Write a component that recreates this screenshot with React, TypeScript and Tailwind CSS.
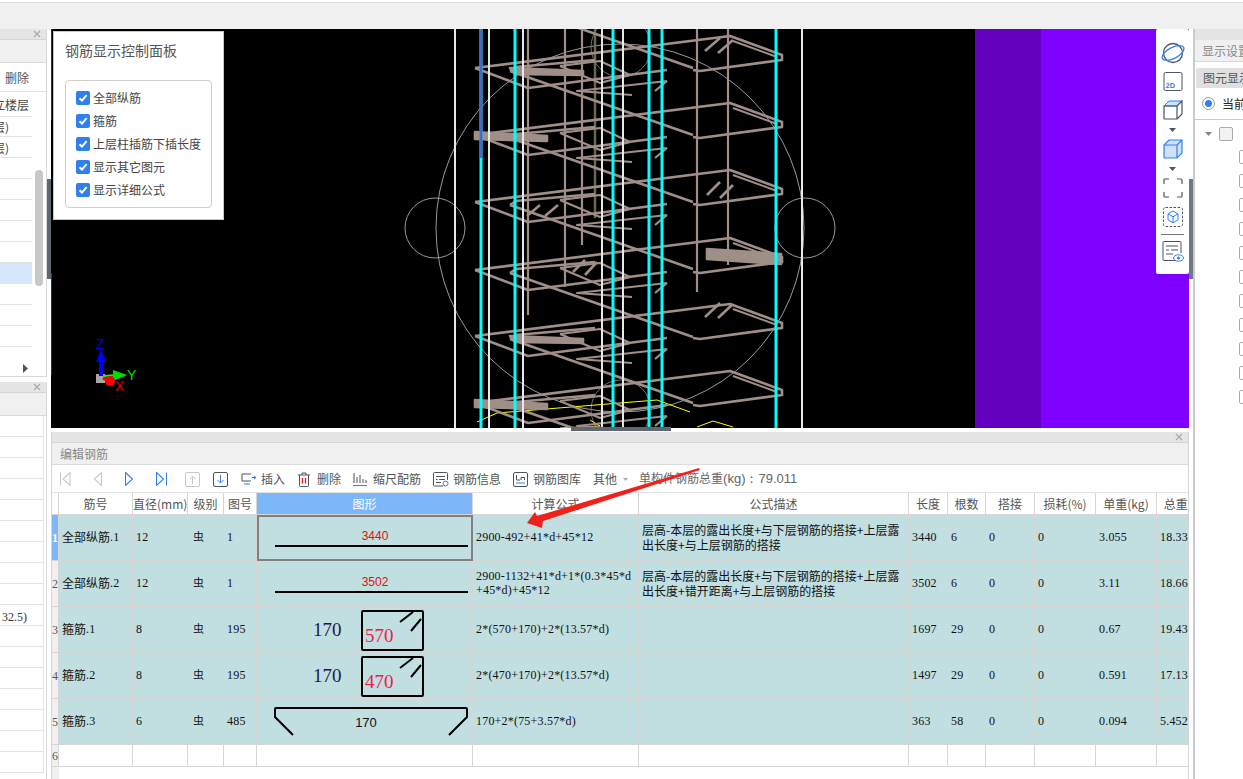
import React from "react";

const CJK = "font-['Noto_Sans_CJK_SC','Noto_Sans_SC',sans-serif]";
const ROW = "grid grid-cols-[7px_74px_55px_36px_33px_216px_166px_270px_39px_38px_49px_61px_61px_60px]";

function Levels() {
  const levels = [1, 68, 135, 202, 270, 336, 403];
  return (
    <>
      {levels.map((y, i) => (
        <g key={y} transform={`translate(475 ${y})`} fill="none" stroke="#a08f88" strokeWidth="2.6" strokeLinejoin="round">
          <polyline points="0,0 255,-32 307,-13 307,-8 225,3 218,2" />
          <polyline points="258,-27 302,-11" strokeWidth="2" />
          <polyline points="0,0 53,20 192,2" />
          <polyline points="35,3 41,-1 120,-8" />
          <line x1="35" y1="3" x2="218" y2="67" />
          <polyline points="85,-2 125,-7 155,7 125,15 85,-2" strokeWidth="2" />
          <polyline points="192,13 102,23 157,27" strokeWidth="2" />
          <line x1="180" y1="23" x2="192" y2="13" strokeWidth="2.2" />
          {(i === 1 || i === 5) && <polygon points="35,0 108,3 108,7 40,6" fill="#a08f88" />}
          {(i === 2 || i === 6) && <polygon points="0,-3 72,1 72,6 0,4" fill="#a08f88" />}
          {i === 4 && <polygon points="232,-21 306,-16 306,-6 232,-11" fill="#a08f88" />}
          {i === 1 && (
            <>
              <line x1="230" y1="-17" x2="245" y2="-30" />
              <line x1="243" y1="-15" x2="258" y2="-28" />
            </>
          )}
          {i === 3 && (
            <>
              <line x1="232" y1="-7" x2="245" y2="-20" />
              <line x1="245" y1="-4" x2="258" y2="-17" />
              <line x1="52" y1="14" x2="65" y2="3" />
              <line x1="70" y1="14" x2="83" y2="3" />
            </>
          )}
          {i === 4 && (
            <>
              <line x1="98" y1="2" x2="110" y2="-10" />
              <line x1="110" y1="5" x2="122" y2="-8" />
            </>
          )}
          {i === 5 && (
            <>
              <line x1="230" y1="-19" x2="245" y2="-33" />
              <line x1="243" y1="-18" x2="258" y2="-32" />
            </>
          )}
        </g>
      ))}
    </>
  );
}

function Scene() {
  return (
    <svg width="1138" height="399" viewBox="51 29 1138 399" className="block">
      <rect x="51" y="29" width="1138" height="399" fill="#000" />
      <rect x="975" y="29" width="66" height="399" fill="#6400c0" />
      <rect x="1041" y="29" width="148" height="399" fill="#8000ff" />
      <line x1="51.5" y1="29" x2="51.5" y2="120" stroke="#6400c0" />
      <line x1="51.5" y1="273" x2="51.5" y2="375" stroke="#6400c0" />
      <g fill="none" stroke="#9a9a9a" strokeWidth="1">
        <circle cx="620" cy="228" r="184" />
        <circle cx="435" cy="228" r="30" />
        <circle cx="805" cy="228" r="30" />
        <circle cx="621" cy="47" r="30" stroke="#707070" />
        <circle cx="621" cy="410" r="30" stroke="#707070" />
      </g>
      <g stroke="#a08f88" strokeWidth="2.2">
        <line x1="528" y1="29" x2="528" y2="315" />
        <line x1="565" y1="29" x2="565" y2="287" />
        <line x1="582" y1="29" x2="582" y2="245" />
        <line x1="697" y1="29" x2="697" y2="292" />
        <line x1="728" y1="29" x2="728" y2="265" />
      </g>
      <line x1="595" y1="29" x2="595" y2="218" stroke="#6b6650" strokeWidth="2.5" />
      <g fill="none" stroke="#ffff00" strokeWidth="1">
        <polyline points="477,422 497,413 657,400 690,412" />
        <polyline points="697,427 713,421 733,427" />
        <polyline points="590,420 600,426 560,428" />
      </g>
      <Levels />
      <g stroke="#00ffff" strokeWidth="3">
        {[481, 515, 613, 649, 662, 776].map((x) => (
          <line key={x} x1={x} y1="29" x2={x} y2="428" />
        ))}
      </g>
      <line x1="481" y1="29" x2="481" y2="158" stroke="#4a66c8" strokeWidth="3" />
      <g stroke="#e8e8e8" strokeWidth="2">
        {[455, 489, 523, 602, 623, 802].map((x) => (
          <line key={x} x1={x} y1="29" x2={x} y2="428" />
        ))}
      </g>
      <g>
        <rect x="96" y="374" width="9" height="9" fill="#a8a8a8" />
        <line x1="101" y1="376" x2="101" y2="360" stroke="#0000ff" strokeWidth="4" />
        <polygon points="101,349 106,362 96,362" fill="#0000ff" />
        <line x1="104" y1="376" x2="118" y2="375" stroke="#00ff00" strokeWidth="2" />
        <polygon points="127,375 113,370 113,381" fill="#00dd00" />
        <circle cx="110" cy="381" r="5" fill="#ff0000" />
        <line x1="103" y1="378" x2="110" y2="381" stroke="#ff0000" strokeWidth="3" />
        <text x="96" y="349" fontSize="14" fill="#0000e0" fontFamily="Liberation Sans">Z</text>
        <text x="127" y="380" fontSize="14" fill="#00e000" fontFamily="Liberation Sans">Y</text>
        <text x="115" y="391" fontSize="14" fill="#e00000" fontFamily="Liberation Sans">X</text>
      </g>
    </svg>
  );
}

function Check({ label }: { label: string }) {
  return (
    <div className="flex items-center h-[23px]">
      <span className="w-[14px] h-[14px] rounded-[2px] bg-[#2f80ed] flex items-center justify-center">
        <svg width="10" height="10" viewBox="0 0 10 10" fill="none" stroke="#fff" strokeWidth="2">
          <path d="M1.5 5.2 L4 7.6 L8.6 2.2" />
        </svg>
      </span>
      <span className="ml-[3px] text-[12px] text-[#444]">{label}</span>
    </div>
  );
}

function ControlPanel() {
  return (
    <div className={`absolute left-[2px] top-[2px] w-[171px] h-[189px] bg-white border border-[#c8c8c8] pl-[11px] pt-[8px] ${CJK}`}>
      <div className="text-[14px] leading-[20px] text-[#555]">钢筋显示控制面板</div>
      <div className="mt-[20px] w-[147px] h-[128px] rounded-[4px] border border-[#cfcfcf] pl-[10px] pt-[5px]">
        {["全部纵筋", "箍筋", "上层柱插筋下插长度", "显示其它图元", "显示详细公式"].map((t) => (
          <Check key={t} label={t} />
        ))}
      </div>
    </div>
  );
}

function ViewTools() {
  const s = "#4b5563";
  const b = "#2f80ed";
  return (
    <div className="absolute right-0 top-0 w-[33px] h-[245px] bg-white rounded-[2px] flex flex-col items-center pt-[13px]">
      <svg width="24" height="22" viewBox="0 0 24 22" fill="none">
        <circle cx="12" cy="11" r="9.5" stroke={s} strokeWidth="1.3" />
        <ellipse cx="12" cy="11" rx="12" ry="5.5" transform="rotate(-28 12 11)" stroke={b} strokeWidth="1.3" />
      </svg>
      <svg className="mt-[8px]" width="20" height="19" viewBox="0 0 20 19" fill="none">
        <rect x="1" y="0.5" width="18" height="18" rx="1.5" stroke={s} />
        <text x="2.5" y="16" fontSize="7.5" fontWeight="700" fill={b} fontFamily="Liberation Sans">2D</text>
      </svg>
      <svg className="mt-[9px]" width="20" height="20" viewBox="0 0 20 20" fill="none">
        <path d="M1 6 L6 1 H19 L14 6 Z" fill="#cfe2fb" stroke={b} />
        <path d="M1 6 H14 V19 H2 Q1 19 1 18 Z M14 6 L19 1 V14 L14 19" stroke={s} strokeWidth="1.2" />
      </svg>
      <svg className="mt-[8px]" width="8" height="4" viewBox="0 0 8 4"><path d="M0 0 H7 L3.5 4 Z" fill={s} /></svg>
      <svg className="mt-[7px]" width="20" height="20" viewBox="0 0 20 20" fill="#cfe2fb" stroke={b} strokeWidth="1.2">
        <path d="M1 6 L6 1 H19 V14 L14 19 H2 Q1 19 1 18 Z" />
        <path d="M1 6 H14 V19 M14 6 L19 1" fill="none" />
      </svg>
      <svg className="mt-[8px]" width="8" height="4" viewBox="0 0 8 4"><path d="M0 0 H7 L3.5 4 Z" fill={s} /></svg>
      <svg className="mt-[7px]" width="20" height="20" viewBox="0 0 20 20" fill="none" stroke={s} strokeWidth="1.2">
        <path d="M1 6 V2 Q1 1 2 1 H6 M14 1 H18 Q19 1 19 2 V6 M19 14 V18 Q19 19 18 19 H14 M6 19 H2 Q1 19 1 18 V14" />
      </svg>
      <svg className="mt-[9px]" width="20" height="20" viewBox="0 0 20 20" fill="none">
        <rect x="0.5" y="0.5" width="19" height="19" rx="2" stroke={s} strokeDasharray="2.5 1.5" />
        <path d="M10 4 L15 6.8 V12.8 L10 15.8 L5 12.8 V6.8 Z M5 6.8 L10 9.8 L15 6.8 M10 9.8 V15.8" stroke={b} />
      </svg>
      <div className="mt-[7px] w-[23px] h-px bg-[#777]" />
      <svg className="mt-[6px]" width="22" height="21" viewBox="0 0 22 21" fill="none">
        <path d="M14 19.5 H2 Q1 19.5 1 18.5 V1.5 Q1 .5 2 .5 H18 Q19 .5 19 1.5 V12" stroke={s} />
        <path d="M4 5 H16 M4 9 H7 M9 9 H16 M4 13 H11" stroke={s} />
        <ellipse cx="16.5" cy="17" rx="5" ry="3.2" stroke={b} />
        <circle cx="16.5" cy="17" r="1.5" fill={b} />
      </svg>
    </div>
  );
}

function PanelHead({ className = "" }: { className?: string }) {
  return (
    <div className={`h-[11px] bg-[#e5e5e5] border-b border-[#d5d5d5] flex justify-end items-center pr-[5px] ${className}`}>
      <svg width="8" height="8" viewBox="0 0 8 8" stroke="#aaa" strokeWidth="1.2"><path d="M1 1 L7 7 M7 1 L1 7" /></svg>
    </div>
  );
}

function LeftRow({ text, on = false }: { text?: string; on?: boolean }) {
  return (
    <div className={`h-[21px] w-[32px] border-b border-[#e2e2e2] text-[12px] leading-[22px] text-[#444] whitespace-nowrap overflow-hidden ${on ? "bg-[#d5e8fb]" : ""}`}>
      {text && <span className="block ml-[-7px]">{text}</span>}
    </div>
  );
}

function LeftColumn() {
  return (
    <div className={`w-[47px] shrink-0 flex flex-col ${CJK}`}>
      <div className="h-[348px] relative bg-white border-r border-b border-[#d8d8d8] overflow-hidden">
        <PanelHead />
        <div className="h-[23px] bg-[#f0f0f0] border-b border-[#d8d8d8]" />
        <div className="h-[29px] w-full border-b border-[#e2e2e2] pl-[5px] text-[12px] leading-[30px] text-[#555]">删除</div>
        <div className="h-[25px] w-[32px] border-b border-[#e2e2e2] text-[12px] leading-[26px] text-[#444] whitespace-nowrap overflow-hidden">
          <span className="block ml-[-7px]">立楼层</span>
        </div>
        <div className="h-[20px] w-[32px] border-b border-[#e2e2e2] text-[12px] leading-[20px] text-[#444] whitespace-nowrap overflow-hidden">
          <span className="block ml-[-7px]">层)</span>
        </div>
        <LeftRow text="层)" />
        <LeftRow />
        <LeftRow />
        <LeftRow />
        <LeftRow />
        <LeftRow />
        <LeftRow on />
        <LeftRow />
        <LeftRow />
        <LeftRow />
        <div className="absolute left-[35px] top-[141px] w-[8px] h-[116px] rounded-[4px] bg-[#c8c8c8]" />
        <svg className="absolute left-[23px] top-[335px]" width="5" height="9" viewBox="0 0 5 9"><path d="M0 0 L5 4.5 L0 9 Z" fill="#4b5563" /></svg>
      </div>
      <div className="mt-[5px] flex-1 bg-white border-r border-[#d8d8d8] overflow-hidden">
        <PanelHead />
        <div className="h-[23px] bg-[#f0f0f0] border-b border-[#d8d8d8]" />
        <div className="w-[44px] border-r border-[#e2e2e2]">
          {Array.from({ length: 17 }).map((_, i) => (
            <div key={i} className="h-[21px] border-b border-[#e2e2e2] text-[12px] leading-[24px] text-[#333] pl-[2px] font-['Liberation_Serif',serif]">
              {i === 9 ? "32.5)" : ""}
            </div>
          ))}
        </div>
      </div>
    </div>
  );
}

function Nav({ d, color, w, cls = "" }: { d: string; color: string; w: number; cls?: string }) {
  return (
    <svg className={cls} width={w} height="14" viewBox={`0 0 ${w} 14`} fill="none" stroke={color} strokeWidth="1.1">
      <path d={d} />
    </svg>
  );
}

function Square({ color, d, cls }: { color: string; d: string; cls: string }) {
  return (
    <svg className={cls} width="15" height="15" viewBox="0 0 15 15" fill="none" stroke={color}>
      <rect x="0.5" y="0.5" width="14" height="14" rx="1.5" stroke={color === "#2f80ed" ? "#4b5563" : color} />
      <path d={d} />
    </svg>
  );
}

function Toolbar() {
  const s = "#4b5563";
  const b = "#2f80ed";
  return (
    <div className={`h-[28px] bg-white flex items-center pl-[8px] pt-px text-[12px] text-[#555] border-b border-[#e2e2e2] whitespace-nowrap ${CJK}`}>
      <Nav w={11} color="#c8c8c8" d="M0.5 0.5 V13.5 M10 0.5 L3 7 L10 13.5 Z" />
      <Nav w={8} cls="ml-[23px]" color="#c8c8c8" d="M7.5 0.5 L0.5 7 L7.5 13.5 Z" />
      <Nav w={8} cls="ml-[23px]" color={b} d="M0.5 0.5 L7.5 7 L0.5 13.5 Z" />
      <Nav w={11} cls="ml-[23px]" color={b} d="M0.5 0.5 L7.5 7 L0.5 13.5 Z M10.5 0.5 V13.5" />
      <Square cls="ml-[18px]" color="#c8c8c8" d="M7.5 12 V4 M4.5 7 L7.5 4 L10.5 7" />
      <Square cls="ml-[13px]" color={b} d="M7.5 3 V11 M4.5 8 L7.5 11 L10.5 8" />
      <svg className="ml-[13px]" width="16" height="12" viewBox="0 0 16 12" fill="none">
        <path d="M10 1 H1 V8 H10" stroke={s} />
        <path d="M3 11 H9 M11 4.5 H15 M13 3 L15 4.5 L13 6" stroke={b} />
      </svg>
      <span className="ml-[4px]">插入</span>
      <svg className="ml-[13px]" width="12" height="15" viewBox="0 0 12 15" fill="none" stroke={s}>
        <path d="M0 3 H12 M4 3 V1 H8 V3 M1.5 3 V13.5 Q1.5 14.5 2.5 14.5 H9.5 Q10.5 14.5 10.5 13.5 V3" />
        <path d="M4.5 6 V11.5 M7.5 6 V11.5" stroke="#e02020" strokeWidth="1.4" />
      </svg>
      <span className="ml-[7px]">删除</span>
      <svg className="ml-[12px]" width="14" height="15" viewBox="0 0 14 15" fill="none" stroke={s}>
        <path d="M1 1 V11 M4 5 V11 M7 3 V11 M10 7 V11 M13 8 V11" />
        <path d="M0 13.5 H14" stroke={b} />
      </svg>
      <span className="ml-[6px]">缩尺配筋</span>
      <svg className="ml-[12px]" width="16" height="15" viewBox="0 0 16 15" fill="none" stroke={s}>
        <path d="M10 14 H1.5 Q.5 14 .5 13 V1.5 Q.5 .5 1.5 .5 H13.5 Q14.5 .5 14.5 1.5 V8" />
        <path d="M3 4.5 H12 M3 7.5 H4.5 M6 7.5 H12 M3 10.5 H8" />
        <circle cx="12.5" cy="11.5" r="2.5" stroke={b} />
      </svg>
      <span className="ml-[4px]">钢筋信息</span>
      <svg className="ml-[12px]" width="15" height="15" viewBox="0 0 15 15" fill="none" stroke={s}>
        <rect x="0.5" y="0.5" width="14" height="14" rx="1.5" />
        <path d="M3.5 3 V8 M3.5 8 H7 M8 8 V5.5 H11.5 V8" />
        <path d="M3 11 H12" stroke={b} />
      </svg>
      <span className="ml-[5px]">钢筋图库</span>
      <span className="ml-[12px]">其他</span>
      <svg className="ml-[6px]" width="5" height="3" viewBox="0 0 5 3"><path d="M0 0 H5 L2.5 3 Z" fill="#aaa" /></svg>
      <span className="ml-[11px] text-[#666]">单构件钢筋总重<span className="text-[13px] font-['Liberation_Sans',sans-serif]">(kg)：79.011</span></span>
    </div>
  );
}

function GradeMark() {
  return <span className={`text-[11px] ${CJK}`}>虫</span>;
}

function Rect({ a, b }: { a: string; b: string }) {
  return (
    <svg width="216" height="46" viewBox="0 0 216 46" className="block" fill="none">
      <text x="56" y="29" fontSize="19" fill="#1a1a50" fontFamily="Liberation Serif">{a}</text>
      <rect x="105" y="4" width="61" height="39" rx="1" stroke="#000" strokeWidth="2" />
      <path d="M143 15 L156 5 M154 24 L164 12" stroke="#000" strokeWidth="2" />
      <text x="108" y="35" fontSize="19" fill="#f0204a" fontFamily="Liberation Serif">{b}</text>
    </svg>
  );
}

function LineShape({ v }: { v: string }) {
  return (
    <svg width="216" height="46" viewBox="0 0 216 46" className="block" fill="none">
      <text x="118" y="25" fontSize="12" textAnchor="middle" fill="#e01010" fontFamily="Liberation Sans">{v}</text>
      <line x1="18" y1="31" x2="211" y2="31" stroke="#000" strokeWidth="2" />
    </svg>
  );
}

function TrapShape() {
  return (
    <svg width="216" height="46" viewBox="0 0 216 46" className="block" fill="none">
      <path d="M36 36 L18 18 V10 Q18 9 19 9 H209 Q210 9 210 10 V18 L192 36" stroke="#000" strokeWidth="2" />
      <text x="109" y="28" fontSize="13" textAnchor="middle" fill="#111" fontFamily="Liberation Sans">170</text>
    </svg>
  );
}

const HEADS = ["", "筋号", "直径(mm)", "级别", "图号", "图形", "计算公式", "公式描述", "长度", "根数", "搭接", "损耗(%)", "单重(kg)", "总重(kg)"];

type Row = {
  name: string; suffix: string; d: string; fig: string; shape: React.ReactNode;
  formula: string[]; desc: string[]; vals: string[];
};

const ROWS: Row[] = [
  {
    name: "全部纵筋", suffix: ".1", d: "12", fig: "1", shape: <LineShape v="3440" />,
    formula: ["2900-492+41*d+45*12"],
    desc: ["层高-本层的露出长度+与下层钢筋的搭接+上层露", "出长度+与上层钢筋的搭接"],
    vals: ["3440", "6", "0", "0", "3.055", "18.33"],
  },
  {
    name: "全部纵筋", suffix: ".2", d: "12", fig: "1", shape: <LineShape v="3502" />,
    formula: ["2900-1132+41*d+1*(0.3*45*d", "+45*d)+45*12"],
    desc: ["层高-本层的露出长度+与下层钢筋的搭接+上层露", "出长度+错开距离+与上层钢筋的搭接"],
    vals: ["3502", "6", "0", "0", "3.11", "18.66"],
  },
  {
    name: "箍筋", suffix: ".1", d: "8", fig: "195", shape: <Rect a="170" b="570" />,
    formula: ["2*(570+170)+2*(13.57*d)"], desc: [],
    vals: ["1697", "29", "0", "0", "0.67", "19.43"],
  },
  {
    name: "箍筋", suffix: ".2", d: "8", fig: "195", shape: <Rect a="170" b="470" />,
    formula: ["2*(470+170)+2*(13.57*d)"], desc: [],
    vals: ["1497", "29", "0", "0", "0.591", "17.139"],
  },
  {
    name: "箍筋", suffix: ".3", d: "6", fig: "485", shape: <TrapShape />,
    formula: ["170+2*(75+3.57*d)"], desc: [],
    vals: ["363", "58", "0", "0", "0.094", "5.452"],
  },
];

const CELL = "border-r border-b border-[#d6d6d6] flex items-center overflow-hidden whitespace-nowrap pb-[2px]";
const MONO = "font-['Liberation_Serif',serif] text-[12px] tracking-[0.2px]";

function Table() {
  return (
    <div className="flex-1 flex flex-col overflow-hidden bg-white relative">
      <div className={`${ROW} h-[22px] w-[1216px]`}>
        {HEADS.map((h, i) => (
          <div
            key={i}
            className={
              i === 5
                ? `bg-[#7db7f8] text-white border-r border-b border-[#d6d6d6] text-[12px] leading-[21px] text-center whitespace-nowrap overflow-hidden ${CJK}`
                : `text-[#555] border-r border-b border-[#d6d6d6] text-[12px] leading-[21px] text-center whitespace-nowrap overflow-hidden ${CJK}`
            }
          >
            {h}
          </div>
        ))}
      </div>
      {ROWS.map((r, i) => (
        <div key={i} className={`${ROW} h-[46px] w-[1216px] bg-[#c1dee1] text-[#111]`}>
          <div className={i === 0
            ? `bg-[#7db7f8] text-white font-bold border-b border-r border-[#d6d6d6] text-[12px] flex items-center justify-center overflow-hidden font-['Liberation_Serif',serif]`
            : `bg-[#f0f0f0] text-[#555] border-b border-r border-[#d6d6d6] text-[12px] flex items-center justify-center overflow-hidden font-['Liberation_Serif',serif]`}>
            {i + 1}
          </div>
          <div className={`${CELL} pl-[3px] text-[12px] ${CJK}`}>
            {r.name}<span className={MONO}>{r.suffix}</span>
          </div>
          <div className={`${CELL} pl-[3px] ${MONO}`}>{r.d}</div>
          <div className={`${CELL} pl-[5px]`}><GradeMark /></div>
          <div className={`${CELL} pl-[3px] ${MONO}`}>{r.fig}</div>
          <div className={i === 0 ? "border-2 border-[#808080] overflow-hidden" : "border-r border-b border-[#d6d6d6] overflow-hidden"}>
            <div className={i === 0 ? "-ml-[2px] -mt-[2px]" : ""}>{r.shape}</div>
          </div>
          <div className={`${CELL} ${MONO} leading-[14px] pl-[3px]`}>
            <div>{r.formula.map((l) => <div key={l}>{l}</div>)}</div>
          </div>
          <div className={`${CELL} text-[12px] leading-[15px] pl-[3px] ${CJK}`}>
            <div>{r.desc.map((l) => <div key={l}>{l}</div>)}</div>
          </div>
          {r.vals.map((v, j) => (
            <div key={j} className={`${CELL} ${MONO} pl-[3px]`}>{v}</div>
          ))}
        </div>
      ))}
      <div className={`${ROW} h-[22px] w-[1216px]`}>
        {HEADS.map((_, i) => (
          <div key={i} className={i === 0
            ? "bg-[#f0f0f0] text-[#555] text-[12px] border-b border-r border-[#d6d6d6] flex items-center justify-center font-['Liberation_Serif',serif]"
            : "border-r border-b border-[#d6d6d6]"}>
            {i === 0 ? "6" : ""}
          </div>
        ))}
      </div>
      <div className="flex-1 w-[7px] bg-[#f0f0f0]" />
    </div>
  );
}

function RightPanel() {
  return (
    <div className={`flex-1 overflow-hidden pl-[4px] bg-white ${CJK}`}>
      <div className="h-full border-l-2 border-[#c8ccd0] overflow-hidden">
        <div className="h-[11px] bg-[#e5e5e5]" />
        <div className="h-[22px] bg-[#f0f0f0] border-b border-[#d8d8d8] pl-[7px] text-[12px] leading-[22px] text-[#888] whitespace-nowrap">显示设置</div>
        <div className="mt-[6px] ml-px h-[20px] w-[60px] bg-[#e0e0e0] rounded-t-[3px] pl-[7px] text-[12px] leading-[20px] text-[#555] whitespace-nowrap overflow-hidden">图元显示设置</div>
        <div className="h-[32px] border-b border-[#c8ccd0] flex items-center pl-[7px] text-[12px] text-[#222] whitespace-nowrap">
          <span className="w-[13px] h-[13px] rounded-full border border-[#999] flex items-center justify-center shrink-0">
            <span className="w-[7px] h-[7px] rounded-full bg-[#2f80ed]" />
          </span>
          <span className="ml-[7px]">当前楼层</span>
        </div>
        <div className="pt-[7px] pl-[10px]">
          <div className="h-[14px] flex items-center">
            <svg width="7" height="4" viewBox="0 0 7 4"><path d="M0 0 H7 L3.5 4 Z" fill="#888" /></svg>
            <span className="ml-[7px] w-[14px] h-[14px] border border-[#aaa] rounded-[2px] bg-[#f2f2f2] flex items-center justify-center shrink-0" />
          </div>
          <div className="ml-[34px] mt-[9px] flex flex-col gap-[10px]">
            {Array.from({ length: 11 }).map((_, i) => (
              <span key={i} className="block w-[14px] h-[14px] border border-[#aaa] rounded-[2px] shrink-0" />
            ))}
          </div>
        </div>
      </div>
    </div>
  );
}

export default function App() {
  return (
    <div className="relative w-[1243px] h-[779px] overflow-hidden bg-white flex flex-col">
      <div className="h-[29px] shrink-0 mt-[2px] -mb-[2px] bg-[#f0f0f0] border-t border-[#dcdcdc]" />
      <div className="flex-1 flex min-h-0">
        <LeftColumn />
        <div className="w-[1142px] shrink-0 flex min-w-0">
          <div className="w-[4px] shrink-0 flex flex-col bg-white">
            <div className="mt-[150px] h-[100px] bg-[#5f6770]" />
          </div>
          <div className="w-[1138px] flex flex-col">
            <div className="relative h-[399px] shrink-0">
              <Scene />
              <ControlPanel />
              <ViewTools />
              <div className="absolute left-[520px] bottom-[-3px] w-[100px] h-[4px] bg-[#5f6770]" />
            </div>
            <div className="flex-1 mt-[4px] flex flex-col overflow-hidden border-l border-r border-[#d8d8d8] bg-white">
              <PanelHead />
              <div className={`h-[22px] bg-[#f0f0f0] border-b border-[#dcdcdc] pl-[8px] text-[12px] leading-[22px] text-[#888] ${CJK}`}>编辑钢筋</div>
              <Toolbar />
              <Table />
            </div>
          </div>
        </div>
        <RightPanel />
      </div>
      <svg className="absolute left-[520px] top-[460px]" width="190" height="75" viewBox="520 460 190 75">
        <polygon points="527,523 535,512 537,516 699,468 700,470 543,521 542,528" fill="#f0201a" />
      </svg>
      <svg className="absolute left-[1189px] top-[179px]" width="4" height="100" viewBox="0 0 4 100">
        <rect width="4" height="100" fill="#6f7780" />
      </svg>
    </div>
  );
}
